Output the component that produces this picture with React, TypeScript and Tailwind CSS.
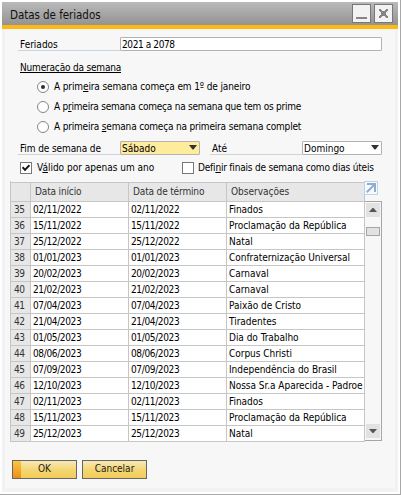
import React from "react";

type Row = [number, string, string];

const rows: Row[] = [
  [35, "02/11/2022", "Finados"],
  [36, "15/11/2022", "Proclamação da República"],
  [37, "25/12/2022", "Natal"],
  [38, "01/01/2023", "Confraternização Universal"],
  [39, "20/02/2023", "Carnaval"],
  [40, "21/02/2023", "Carnaval"],
  [41, "07/04/2023", "Paixão de Cristo"],
  [42, "21/04/2023", "Tiradentes"],
  [43, "01/05/2023", "Dia do Trabalho"],
  [44, "08/06/2023", "Corpus Christi"],
  [45, "07/09/2023", "Independência do Brasil"],
  [46, "12/10/2023", "Nossa Sr.a Aparecida - Padroe"],
  [47, "02/11/2023", "Finados"],
  [48, "15/11/2023", "Proclamação da República"],
  [49, "25/12/2023", "Natal"],
];

const U = ({ children }: { children: React.ReactNode }) => (
  <span className="underline decoration-1 underline-offset-1">{children}</span>
);

function Radio({ checked, children }: { checked?: boolean; children: React.ReactNode }) {
  return (
    <div className="flex h-5 items-center">
      <span className="flex size-[12px] shrink-0 items-center justify-center rounded-full border border-[#858585] bg-white">
        {checked && <span className="size-[4px] rounded-full bg-[#2c2c3c]" />}
      </span>
      <span className="ml-[5px] whitespace-nowrap leading-[14px]">{children}</span>
    </div>
  );
}

function Check({ checked }: { checked?: boolean }) {
  return (
    <span className="flex size-[12px] shrink-0 items-center justify-center border border-[#777] bg-white">
      {checked && (
        <svg width="8" height="8" viewBox="0 0 8 8" fill="none" stroke="#111" strokeWidth="1.9">
          <path d="M0.6 3.2 L3 5.8 L7.4 1.2" />
        </svg>
      )}
    </span>
  );
}

function Combo({ value, active }: { value: string; active?: boolean }) {
  return (
    <div
      className={`flex h-[14px] w-20 shrink-0 items-start justify-between rounded-[1px] border border-[#b3b3b3] pl-px pr-[2px] ${active ? "bg-[#ffeb9c]" : "bg-white"}`}
    >
      <span className="leading-[14px]">{value}</span>
      <svg width="8" height="5" viewBox="0 0 8 5" className="mt-[3px]">
        <path d="M0 0H8L4.5 4.5H3.5Z" fill="#333" />
      </svg>
    </div>
  );
}

export default function App() {
  return (
    <div className="h-[495px] w-[401px] overflow-hidden border-b border-r border-[#a8a8a8] bg-white pl-[2px] pt-[2px] font-['DejaVu_Sans_Condensed','DejaVu_Sans',sans-serif] text-[10px] text-black [font-stretch:condensed]">
      <div className="flex h-[490px] w-[396px] flex-col bg-[#f2f2f2]">
        <header className="flex h-[27px] shrink-0 items-start justify-between border-b-4 border-[#fdb813] bg-linear-to-b from-[#bababa] to-[#939393] pl-2 pr-[5px] pt-[2px]">
          <h1 className="text-[11.5px] leading-[22px] tracking-[-0.05px] text-[#111]">Datas de feriados</h1>
          <div className="flex gap-[3px]">
            <button className="flex h-[19px] w-[19px] items-end justify-center border border-[#777] bg-[#f2f2f2] pb-[3px]">
              <span className="h-[2px] w-[11px] bg-[#858585]" />
            </button>
            <button className="flex h-[19px] w-[19px] items-center justify-center border border-[#777] bg-[#f2f2f2]">
              <svg width="9" height="9" viewBox="0 0 9 9" fill="#858585" shapeRendering="crispEdges">
                <path d="M0 0H2V1H3V2H6V1H7V0H9V2H8V3H7V6H8V7H9V9H7V8H6V7H3V8H2V9H0V7H1V6H2V3H1V2H0Z" />
              </svg>
            </button>
          </div>
        </header>

        <main className="mx-[3px] mb-1 flex grow flex-col bg-[#f7f7f7] pl-[5px] pt-2">
          <div className="ml-2 flex h-[14px]">
            <label className="h-[14px] w-[102px] border-b border-[#c8d4de] pl-[2px] leading-[16px]">Feriados</label>
            <div className="w-[262px] rounded-[1px] border border-[#b3b3b3] bg-white pl-px leading-[14px] tracking-[-0.4px]">2021 a 2078</div>
          </div>

          <div className="ml-[10px] mt-[9px] flex h-[17px]">
            <span className="h-[13px] border-b border-black leading-[16px] tracking-[-0.18px]">Numeração da semana</span>
          </div>

          <div className="ml-[27px]">
            <div className="tracking-[-0.12px]">
              <Radio checked>A prim<U>e</U>ira semana começa em 1º de janeiro</Radio>
            </div>
            <div className="tracking-[-0.23px]">
              <Radio>A p<U>r</U>imeira semana começa na semana que tem os prime</Radio>
            </div>
            <div className="tracking-[-0.18px]">
              <Radio>A primeira <U>s</U>emana começa na primeira semana complet</Radio>
            </div>
          </div>

          <div className="ml-2 mt-[4px] flex h-[14px]">
            <label className="w-[102px] border-b border-[#ccd2d8] pl-[2px] leading-[16px] tracking-[-0.1px]">Fim de semana de</label>
            <Combo value="Sábado" active />
            <label className="ml-[10px] w-[92px] border-b border-[#d2d2d2] pl-[2px] leading-[16px]">Até</label>
            <Combo value="Domingo" />
          </div>

          <div className="ml-[10px] mt-[7px] flex h-[12px] items-center leading-[14px] tracking-[-0.19px]">
            <Check checked />
            <span className="ml-[5px] w-[145px] tracking-[0px]">V<U>á</U>lido por apenas um ano</span>
            <Check />
            <span className="ml-1 whitespace-nowrap">Defi<U>n</U>ir finais de semana como dias úteis</span>
          </div>

          <div className="mt-[7px] flex">
            <div className="grid w-[355px] grid-cols-[20px_98px_98px_138px] grid-rows-[19px] border-l border-[#c6c6c6] pt-px leading-[15px]">
              <div className="col-span-4 grid h-[19px] w-[355px] grid-cols-subgrid border-t border-[#c6c6c6] bg-[#e7e7e7] leading-[17px] text-[#333]">
                <span className="border-r border-[#c6c6c6]" />
                <span className="border-r border-[#c6c6c6] pl-1 tracking-[-0.15px]">Data início</span>
                <span className="border-r border-[#c6c6c6] pl-1 tracking-[-0.15px]">Data de término</span>
                <span className="border-r border-[#c6c6c6] pl-1">Observações</span>
              </div>
              {rows.map(([n, date, name]) => (
                <div key={n} className="col-span-4 grid h-4 grid-cols-subgrid border-t border-[#c6c6c6] bg-white">
                  <span className="border-r border-[#c6c6c6] bg-[#e7e7e7] pl-[3px] tracking-[-0.4px] text-[#333]">{n}</span>
                  <span className="border-r border-[#c6c6c6] pl-[2px] tracking-[-0.35px]">{date}</span>
                  <span className="border-r border-[#c6c6c6] pl-[2px] tracking-[-0.35px]">{date}</span>
                  <span className="whitespace-nowrap border-r border-[#c6c6c6] pl-[2px] tracking-[-0.03px]">{name}</span>
                </div>
              ))}
              <div className="col-span-4 h-px bg-[#c6c6c6]" />
            </div>

            <div className="flex w-[17px] flex-col">
              <button className="-ml-px flex size-[14px] items-center justify-center border border-[#bcd3e8] bg-[#f8fbfe]">
                <svg width="10" height="10" viewBox="0 0 10 10" fill="none" stroke="#92acd0" strokeWidth="2">
                  <path d="M1 1H9V9M9 1L0.8 9.2" />
                </svg>
              </button>
              <div className="mt-[6px] flex h-[240px] flex-col border-b border-r border-t border-[#a5a5a5] bg-[#f7f7f7] px-px pb-[2px] pt-px">
                <span className="flex h-[14px] items-center justify-center bg-[#e2e2e2]">
                  <svg width="8" height="4" viewBox="0 0 8 4"><path d="M0 4L3.5 0H4.5L8 4Z" fill="#555" /></svg>
                </span>
                <span className="mt-[10px] h-[9px] border border-[#a5a5a5] bg-[#e2e2e2]" />
                <span className="mt-auto flex h-[14px] items-center justify-center bg-[#e2e2e2]">
                  <svg width="8" height="4" viewBox="0 0 8 4"><path d="M0 0L3.5 4H4.5L8 0Z" fill="#555" /></svg>
                </span>
              </div>
            </div>
          </div>

          <div className="ml-[2px] mt-[18px] flex gap-[5px] text-[#222]">
            <button className="flex h-[19px] w-[65px] border border-[#666] bg-linear-to-b from-[#f7e8b8] via-[#f4d772] to-[#f2cd5a]">
              <span className="h-full w-2 bg-linear-to-b from-[#fbc640] to-[#ed8f16]" />
              <span className="grow pr-2 leading-[16px]">OK</span>
            </button>
            <button className="flex h-[19px] w-[65px] justify-center border border-[#666] bg-linear-to-b from-[#f7e8b8] via-[#f4d772] to-[#f2cd5a] leading-[16px]">
              <span>Cancelar</span>
            </button>
          </div>
        </main>
      </div>
    </div>
  );
}
